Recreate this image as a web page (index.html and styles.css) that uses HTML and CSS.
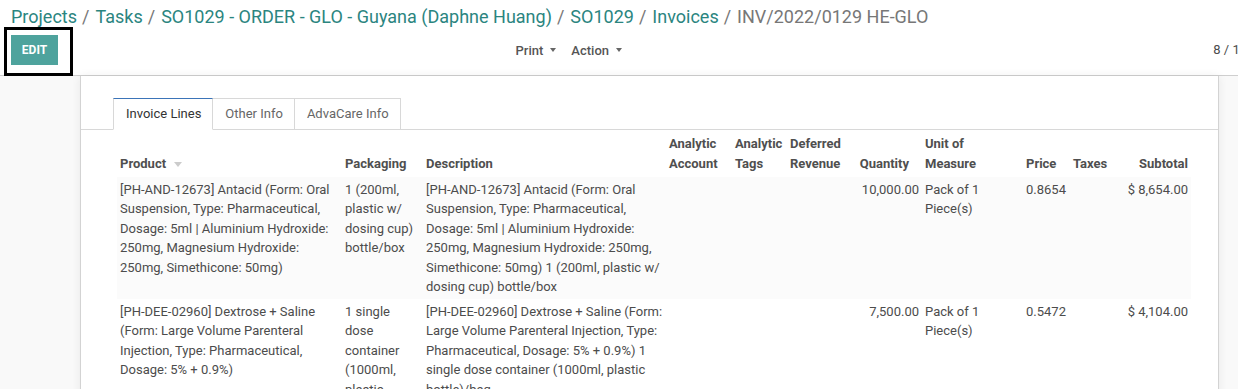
FILE: index.html
```html
<!DOCTYPE html>
<html lang="en">
  <head>
    <meta charset="UTF-8" />
    <meta name="viewport" content="width=device-width, initial-scale=1.0" />
    <link rel="stylesheet" href="styles.css">
    <title>INV/2022/0129 HE-GLO</title>
  </head>
  <body>
    <div class="page">
      <div class="control-panel">
        <ol class="breadcrumb">
          <li><a href="#">Projects</a></li>
          <li class="sep">/</li>
          <li><a href="#">Tasks</a></li>
          <li class="sep">/</li>
          <li><a href="#">SO1029 - ORDER - GLO - Guyana (Daphne Huang)</a></li>
          <li class="sep">/</li>
          <li><a href="#">SO1029</a></li>
          <li class="sep">/</li>
          <li><a href="#">Invoices</a></li>
          <li class="sep">/</li>
          <li class="current">INV/2022/0129 HE-GLO</li>
        </ol>

        <div class="cp-row">
          <div class="cp-left">
            <div class="edit-wrap">
              <button class="btn-edit">Edit</button>
              <span class="highlight"></span>
            </div>
            <div class="sidebar">
              <button class="dropdown">Print <span class="caret"></span></button>
              <button class="dropdown">Action <span class="caret"></span></button>
            </div>
          </div>
          <div class="cp-right">
            <span class="pager-value">8 / 13</span>
            <span class="pager-btns">
              <button>&lsaquo;</button><button>&rsaquo;</button>
            </span>
          </div>
        </div>
      </div>

      <div class="content">
        <div class="sheet">
          <ul class="tabs">
            <li class="active"><a href="#">Invoice Lines</a></li>
            <li><a href="#">Other Info</a></li>
            <li><a href="#">AdvaCare Info</a></li>
          </ul>

          <table class="lines">
            <colgroup>
              <col class="c-product">
              <col class="c-packaging">
              <col class="c-description">
              <col class="c-account">
              <col class="c-tags">
              <col class="c-deferred">
              <col class="c-quantity">
              <col class="c-uom">
              <col class="c-price">
              <col class="c-taxes">
              <col class="c-subtotal">
            </colgroup>
            <thead>
              <tr>
                <th class="product">Product <span class="sort"></span></th>
                <th>Packaging</th>
                <th>Description</th>
                <th>Analytic Account</th>
                <th>Analytic Tags</th>
                <th>Deferred Revenue</th>
                <th class="num qty-head">Quantity</th>
                <th class="uom-head">Unit of Measure</th>
                <th>Price</th>
                <th>Taxes</th>
                <th class="num">Subtotal</th>
              </tr>
            </thead>
            <tbody>
              <tr class="odd">
                <td class="product">[PH-AND-12673] Antacid (Form: Oral Suspension, Type: Pharmaceutical, Dosage: 5ml | Aluminium Hydroxide: 250mg, Magnesium Hydroxide: 250mg, Simethicone: 50mg)</td>
                <td class="packaging">1 (200ml, plastic w/ dosing cup) bottle/box</td>
                <td class="description">[PH-AND-12673] Antacid (Form: Oral Suspension, Type: Pharmaceutical, Dosage: 5ml | Aluminium Hydroxide: 250mg, Magnesium Hydroxide: 250mg, Simethicone: 50mg) 1 (200ml, plastic w/ dosing cup) bottle/box</td>
                <td></td>
                <td></td>
                <td></td>
                <td class="num">10,000.00</td>
                <td>Pack of 1 Piece(s)</td>
                <td>0.8654</td>
                <td></td>
                <td class="num">$ 8,654.00</td>
              </tr>
              <tr>
                <td class="product">[PH-DEE-02960] Dextrose + Saline (Form: Large Volume Parenteral Injection, Type: Pharmaceutical, Dosage: 5% + 0.9%)</td>
                <td class="packaging">1 single dose container (1000ml, plastic bottle)/bag</td>
                <td class="description">[PH-DEE-02960] Dextrose + Saline (Form: Large Volume Parenteral Injection, Type: Pharmaceutical, Dosage: 5% + 0.9%) 1 single dose container (1000ml, plastic bottle)/bag</td>
                <td></td>
                <td></td>
                <td></td>
                <td class="num">7,500.00</td>
                <td>Pack of 1 Piece(s)</td>
                <td>0.5472</td>
                <td></td>
                <td class="num">$ 4,104.00</td>
              </tr>
            </tbody>
          </table>
        </div>
      </div>
    </div>
  </body>
</html>
```

FILE: styles.css
```css
* {
  box-sizing: border-box;
}

html,
body {
  margin: 0;
  overflow: hidden;
}

body {
  font-family: Roboto, "Noto Sans", sans-serif;
  font-size: 13px;
  line-height: 1.5;
  color: #4c4c4c;
  background: #f9f9f9;
}

.page {
  width: 1299px;
  height: 389px;
}

button {
  font-family: inherit;
  cursor: pointer;
}

/* control panel */
.control-panel {
  height: 76px;
  background: white;
  border-bottom: 1px solid #cfcfcf;
  padding: 5px 16px 0 11px;
}

.breadcrumb {
  display: flex;
  list-style: none;
  margin: 0;
  padding: 0;
  font-size: 18px;
  line-height: 24px;
  white-space: nowrap;
}

.breadcrumb a {
  color: #2b857f;
  text-decoration: none;
}

.breadcrumb .sep {
  color: #777;
  padding: 0 6px 0 5px;
}

.breadcrumb .current {
  color: #777;
}

.cp-row {
  display: grid;
  grid-template-columns: 618px 1fr;
  margin-top: 6px;
}

.cp-left {
  display: flex;
  align-items: center;
}

.edit-wrap {
  position: relative;
}

.btn-edit {
  display: block;
  width: 47px;
  height: 30px;
  border: none;
  background: #4ea39d;
  color: white;
  font-size: 12px;
  font-weight: bold;
  text-transform: uppercase;
  padding: 0;
}

.highlight {
  position: absolute;
  left: -7px;
  top: -8px;
  width: 69px;
  height: 49px;
  border: 3px solid black;
}

.sidebar {
  margin-left: auto;
  display: flex;
}

.dropdown {
  border: none;
  background: none;
  color: #555;
  font-size: 13px;
  font-weight: 500;
  padding: 4px 7px 4px 8px;
  display: flex;
  align-items: center;
}

.caret {
  display: inline-block;
  margin-left: 7px;
  border-top: 4px solid #666;
  border-left: 3px solid transparent;
  border-right: 3px solid transparent;
}

.cp-right {
  display: flex;
  justify-content: flex-end;
  align-items: center;
}

.pager-value {
  color: #4c4c4c;
}

.pager-btns {
  display: flex;
  margin-left: 8px;
}

.pager-btns button {
  width: 14px;
  height: 26px;
  border: none;
  background: none;
  color: #666;
  padding: 0;
}

/* sheet */
.content {
  padding: 0 80px;
}

.sheet {
  background: white;
  border: 1px solid #d3d3d3;
  border-top: none;
  box-shadow: 0 0 9px rgba(0, 0, 0, 0.07);
  height: 330px;
  padding-top: 22px;
}

.tabs {
  display: flex;
  list-style: none;
  margin: 0;
  padding: 0 0 0 32px;
  border-bottom: 1px solid #d8d8d8;
}

.tabs li {
  margin-bottom: -1px;
}

.tabs a {
  display: block;
  padding: 5px 11px 5px 12px;
  line-height: 20px;
  border: 1px solid #d8d8d8;
  margin-left: -1px;
  color: #666;
  text-decoration: none;
}

.tabs li:first-child a {
  margin-left: 0;
}

.tabs .active a {
  color: #333;
  border-top-color: #3b74b8;
  border-bottom-color: white;
  position: relative;
}

/* lines table */
.lines {
  table-layout: fixed;
  border-collapse: collapse;
  width: 1074px;
  margin-left: 36px;
}

.c-product { width: 225px; }
.c-packaging { width: 81px; }
.c-description { width: 243px; }
.c-account { width: 66px; }
.c-tags { width: 55px; }
.c-deferred { width: 61px; }
.c-quantity { width: 74px; }
.c-uom { width: 101px; }
.c-price { width: 47px; }
.c-taxes { width: 50px; }
.c-subtotal { width: 71px; }

.lines th {
  text-align: left;
  vertical-align: bottom;
  font-weight: bold;
  color: #4f4f4f;
  padding: 4px 3px 4px;
}

.lines td {
  vertical-align: top;
  padding: 2.5px 3px;
}

.lines .num {
  text-align: right;
}

.lines .qty-head {
  padding-right: 13px;
}

.lines .uom-head {
  padding-right: 24px;
}

.lines td.product {
  padding-right: 10px;
}

.lines td.packaging {
  padding-right: 8px;
}

.lines td.description {
  padding-right: 0;
}

.lines tr.odd td {
  background: #fbfbfb;
}

.sort {
  display: inline-block;
  vertical-align: middle;
  margin-left: 5px;
  border-top: 5px solid #ccc;
  border-left: 4px solid transparent;
  border-right: 4px solid transparent;
}
```
